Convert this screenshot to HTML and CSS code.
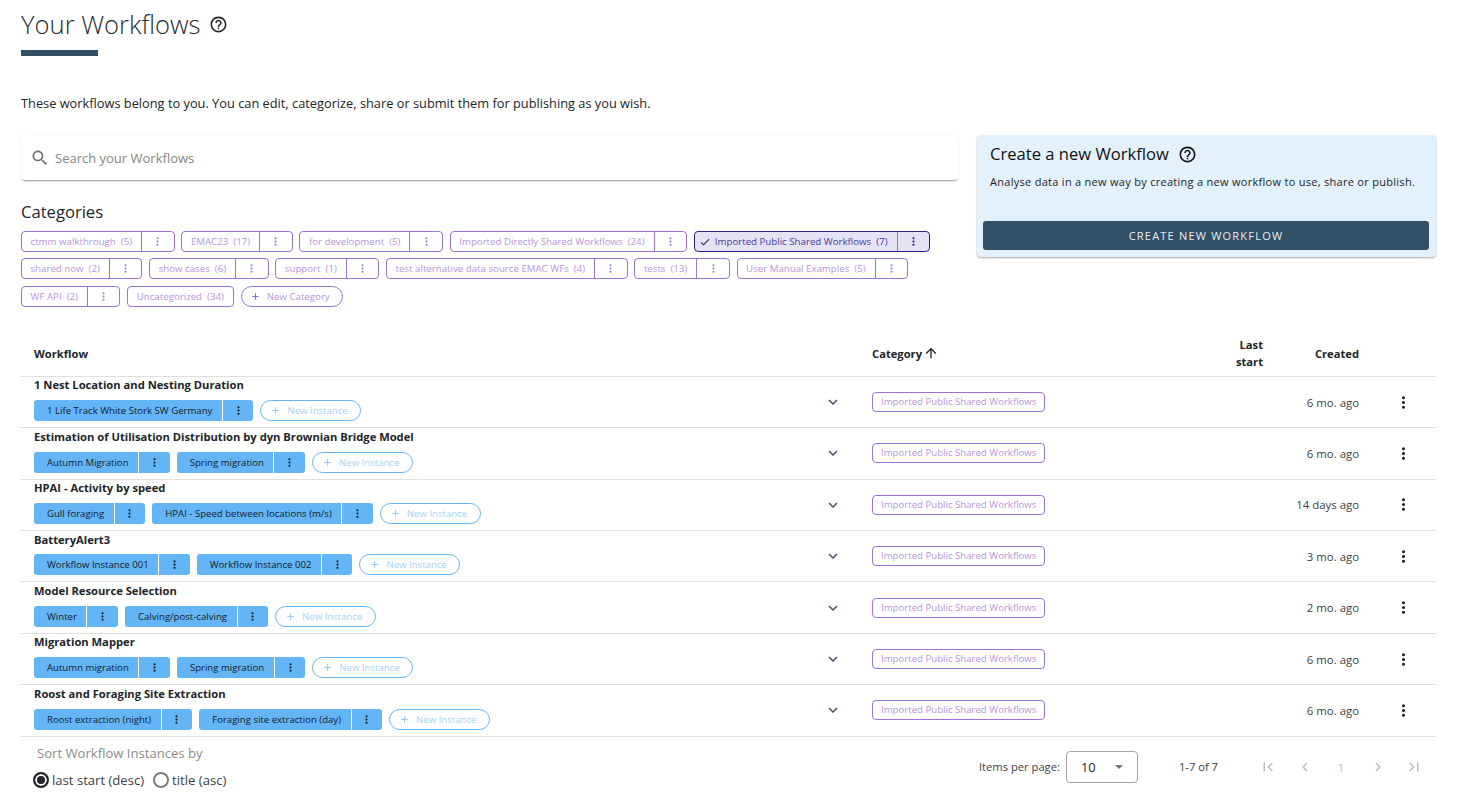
FILE: index.html
```html
<!DOCTYPE html>
<html lang="en">
<head>
<meta charset="utf-8">
<title>Your Workflows</title>
<link rel="stylesheet" href="styles.css">
</head>
<body>
<svg class="defs" aria-hidden="true">
<symbol id="help" viewBox="0 0 24 24"><path d="M11 18h2v-2h-2v2zm1-16C6.48 2 2 6.48 2 12s4.48 10 10 10 10-4.48 10-10S17.52 2 12 2zm0 18c-4.41 0-8-3.59-8-8s3.59-8 8-8 8 3.59 8 8-3.59 8-8 8zm0-14c-2.21 0-4 1.79-4 4h2c0-1.1.9-2 2-2s2 .9 2 2c0 2-3 1.75-3 5h2c0-2.25 3-2.5 3-5 0-2.21-1.79-4-4-4z"/></symbol>
<symbol id="search" viewBox="0 0 24 24"><path d="M15.5 14h-.79l-.28-.27C15.41 12.59 16 11.11 16 9.5 16 5.91 13.09 3 9.5 3S3 5.91 3 9.5 5.91 16 9.5 16c1.61 0 3.09-.59 4.23-1.57l.27.28v.79l5 4.99L20.49 19l-4.99-5zm-6 0C7.01 14 5 11.99 5 9.5S7.01 5 9.5 5 14 7.01 14 9.5 11.99 14 9.5 14z"/></symbol>
<symbol id="more" viewBox="0 0 24 24"><path d="M12 8c1.1 0 2-.9 2-2s-.9-2-2-2-2 .9-2 2 .9 2 2 2zm0 2c-1.1 0-2 .9-2 2s.9 2 2 2 2-.9 2-2-.9-2-2-2zm0 6c-1.1 0-2 .9-2 2s.9 2 2 2 2-.9 2-2-.9-2-2-2z"/></symbol>
<symbol id="expand" viewBox="0 0 24 24"><path d="M16.59 8.59L12 13.17 7.41 8.59 6 10l6 6 6-6z"/></symbol>
<symbol id="add" viewBox="0 0 24 24"><path d="M19 13h-6v6h-2v-6H5v-2h6V5h2v6h6v2z"/></symbol>
<symbol id="check" viewBox="0 0 24 24"><path d="M9 16.17L4.83 12l-1.42 1.41L9 19 21 7l-1.41-1.41z"/></symbol>
<symbol id="up" viewBox="0 0 24 24"><path d="M4 12l1.41 1.41L11 7.83V20h2V7.83l5.58 5.59L20 12l-8-8-8 8z"/></symbol>
<symbol id="first" viewBox="0 0 24 24"><path d="M18.41 16.59L13.82 12l4.59-4.59L17 6l-6 6 6 6zM6 6h2v12H6z"/></symbol>
<symbol id="last" viewBox="0 0 24 24"><path d="M5.59 7.41L10.18 12l-4.59 4.59L7 18l6-6-6-6zM16 6h2v12h-2z"/></symbol>
<symbol id="prev" viewBox="0 0 24 24"><path d="M15.41 7.41L14 6l-6 6 6 6 1.41-1.41L10.83 12z"/></symbol>
<symbol id="next" viewBox="0 0 24 24"><path d="M10 6L8.59 7.41 13.17 12l-4.58 4.59L10 18l6-6z"/></symbol>
</svg>
<main class="page">
  <header class="head">
    <h1 class="title">Your Workflows <svg class="title-help"><use href="#help"/></svg></h1>
    <div class="rule"></div>
  </header>
  <p class="intro">These workflows belong to you. You can edit, categorize, share or submit them for publishing as you wish.</p>

  <section class="top">
    <div class="top-left">
      <div class="search">
        <svg class="search-icon"><use href="#search"/></svg>
        <span class="search-ph">Search your Workflows</span>
      </div>
      <h2 class="cat-title">Categories</h2>
      <div class="chips">
        <div class="cat"><span class="cat-label">ctmm walkthrough&nbsp; (5)</span><span class="cat-menu"><svg class="dots"><use href="#more"/></svg></span></div>
        <div class="cat"><span class="cat-label">EMAC23&nbsp; (17)</span><span class="cat-menu"><svg class="dots"><use href="#more"/></svg></span></div>
        <div class="cat"><span class="cat-label">for development&nbsp; (5)</span><span class="cat-menu"><svg class="dots"><use href="#more"/></svg></span></div>
        <div class="cat"><span class="cat-label">Imported Directly Shared Workflows&nbsp; (24)</span><span class="cat-menu"><svg class="dots"><use href="#more"/></svg></span></div>
        <div class="cat cat-on"><span class="cat-label"><svg class="cat-check"><use href="#check"/></svg>Imported Public Shared Workflows&nbsp; (7)</span><span class="cat-menu"><svg class="dots"><use href="#more"/></svg></span></div>
        <div class="cat"><span class="cat-label">shared now&nbsp; (2)</span><span class="cat-menu"><svg class="dots"><use href="#more"/></svg></span></div>
        <div class="cat"><span class="cat-label">show cases&nbsp; (6)</span><span class="cat-menu"><svg class="dots"><use href="#more"/></svg></span></div>
        <div class="cat"><span class="cat-label">support&nbsp; (1)</span><span class="cat-menu"><svg class="dots"><use href="#more"/></svg></span></div>
        <div class="cat"><span class="cat-label">test alternative data source EMAC WFs&nbsp; (4)</span><span class="cat-menu"><svg class="dots"><use href="#more"/></svg></span></div>
        <div class="cat"><span class="cat-label">tests&nbsp; (13)</span><span class="cat-menu"><svg class="dots"><use href="#more"/></svg></span></div>
        <div class="cat"><span class="cat-label">User Manual Examples&nbsp; (5)</span><span class="cat-menu"><svg class="dots"><use href="#more"/></svg></span></div>
        <div class="cat"><span class="cat-label">WF API&nbsp; (2)</span><span class="cat-menu"><svg class="dots"><use href="#more"/></svg></span></div>
        <div class="cat"><span class="cat-label">Uncategorized&nbsp; (34)</span></div>
        <div class="cat cat-new"><svg class="cat-add"><use href="#add"/></svg>New Category</div>
      </div>
    </div>
    <aside class="create">
      <h2 class="create-title">Create a new Workflow <svg class="create-help"><use href="#help"/></svg></h2>
      <p class="create-text">Analyse data in a new way by creating a new workflow to use, share or publish.</p>
      <div class="create-btn">CREATE NEW WORKFLOW</div>
    </aside>
  </section>

  <section class="table">
    <div class="row row-head">
      <div>Workflow</div>
      <div></div>
      <div class="th-cat">Category <svg class="sort"><use href="#up"/></svg></div>
      <div class="num">Last<br>start</div>
      <div class="num">Created</div>
      <div></div>
    </div>

    <div class="row">
      <div class="wf">
        <div class="wf-name">1 Nest Location and Nesting Duration</div>
        <div class="insts">
          <div class="inst"><span class="inst-label">1 Life Track White Stork SW Germany</span><span class="inst-menu"><svg class="dots"><use href="#more"/></svg></span></div>
          <div class="new-inst"><svg class="new-add"><use href="#add"/></svg>New Instance</div>
        </div>
      </div>
      <div class="exp"><svg class="chev"><use href="#expand"/></svg></div>
      <div class="cell-cat"><span class="tag">Imported Public Shared Workflows</span></div>
      <div></div>
      <div class="num date">6 mo. ago</div>
      <div class="act"><svg class="act-dots"><use href="#more"/></svg></div>
    </div>

    <div class="row">
      <div class="wf">
        <div class="wf-name">Estimation of Utilisation Distribution by dyn Brownian Bridge Model</div>
        <div class="insts">
          <div class="inst"><span class="inst-label">Autumn Migration</span><span class="inst-menu"><svg class="dots"><use href="#more"/></svg></span></div>
          <div class="inst"><span class="inst-label">Spring migration</span><span class="inst-menu"><svg class="dots"><use href="#more"/></svg></span></div>
          <div class="new-inst"><svg class="new-add"><use href="#add"/></svg>New Instance</div>
        </div>
      </div>
      <div class="exp"><svg class="chev"><use href="#expand"/></svg></div>
      <div class="cell-cat"><span class="tag">Imported Public Shared Workflows</span></div>
      <div></div>
      <div class="num date">6 mo. ago</div>
      <div class="act"><svg class="act-dots"><use href="#more"/></svg></div>
    </div>

    <div class="row">
      <div class="wf">
        <div class="wf-name">HPAI - Activity by speed</div>
        <div class="insts">
          <div class="inst"><span class="inst-label">Gull foraging</span><span class="inst-menu"><svg class="dots"><use href="#more"/></svg></span></div>
          <div class="inst"><span class="inst-label">HPAI - Speed between locations (m/s)</span><span class="inst-menu"><svg class="dots"><use href="#more"/></svg></span></div>
          <div class="new-inst"><svg class="new-add"><use href="#add"/></svg>New Instance</div>
        </div>
      </div>
      <div class="exp"><svg class="chev"><use href="#expand"/></svg></div>
      <div class="cell-cat"><span class="tag">Imported Public Shared Workflows</span></div>
      <div></div>
      <div class="num date">14 days ago</div>
      <div class="act"><svg class="act-dots"><use href="#more"/></svg></div>
    </div>

    <div class="row">
      <div class="wf">
        <div class="wf-name">BatteryAlert3</div>
        <div class="insts">
          <div class="inst"><span class="inst-label">Workflow Instance 001</span><span class="inst-menu"><svg class="dots"><use href="#more"/></svg></span></div>
          <div class="inst"><span class="inst-label">Workflow Instance 002</span><span class="inst-menu"><svg class="dots"><use href="#more"/></svg></span></div>
          <div class="new-inst"><svg class="new-add"><use href="#add"/></svg>New Instance</div>
        </div>
      </div>
      <div class="exp"><svg class="chev"><use href="#expand"/></svg></div>
      <div class="cell-cat"><span class="tag">Imported Public Shared Workflows</span></div>
      <div></div>
      <div class="num date">3 mo. ago</div>
      <div class="act"><svg class="act-dots"><use href="#more"/></svg></div>
    </div>

    <div class="row">
      <div class="wf">
        <div class="wf-name">Model Resource Selection</div>
        <div class="insts">
          <div class="inst"><span class="inst-label">Winter</span><span class="inst-menu"><svg class="dots"><use href="#more"/></svg></span></div>
          <div class="inst"><span class="inst-label">Calving/post-calving</span><span class="inst-menu"><svg class="dots"><use href="#more"/></svg></span></div>
          <div class="new-inst"><svg class="new-add"><use href="#add"/></svg>New Instance</div>
        </div>
      </div>
      <div class="exp"><svg class="chev"><use href="#expand"/></svg></div>
      <div class="cell-cat"><span class="tag">Imported Public Shared Workflows</span></div>
      <div></div>
      <div class="num date">2 mo. ago</div>
      <div class="act"><svg class="act-dots"><use href="#more"/></svg></div>
    </div>

    <div class="row">
      <div class="wf">
        <div class="wf-name">Migration Mapper</div>
        <div class="insts">
          <div class="inst"><span class="inst-label">Autumn migration</span><span class="inst-menu"><svg class="dots"><use href="#more"/></svg></span></div>
          <div class="inst"><span class="inst-label">Spring migration</span><span class="inst-menu"><svg class="dots"><use href="#more"/></svg></span></div>
          <div class="new-inst"><svg class="new-add"><use href="#add"/></svg>New Instance</div>
        </div>
      </div>
      <div class="exp"><svg class="chev"><use href="#expand"/></svg></div>
      <div class="cell-cat"><span class="tag">Imported Public Shared Workflows</span></div>
      <div></div>
      <div class="num date">6 mo. ago</div>
      <div class="act"><svg class="act-dots"><use href="#more"/></svg></div>
    </div>

    <div class="row">
      <div class="wf">
        <div class="wf-name">Roost and Foraging Site Extraction</div>
        <div class="insts">
          <div class="inst"><span class="inst-label">Roost extraction (night)</span><span class="inst-menu"><svg class="dots"><use href="#more"/></svg></span></div>
          <div class="inst"><span class="inst-label">Foraging site extraction (day)</span><span class="inst-menu"><svg class="dots"><use href="#more"/></svg></span></div>
          <div class="new-inst"><svg class="new-add"><use href="#add"/></svg>New Instance</div>
        </div>
      </div>
      <div class="exp"><svg class="chev"><use href="#expand"/></svg></div>
      <div class="cell-cat"><span class="tag">Imported Public Shared Workflows</span></div>
      <div></div>
      <div class="num date">6 mo. ago</div>
      <div class="act"><svg class="act-dots"><use href="#more"/></svg></div>
    </div>
  </section>

  <footer class="foot">
    <div class="sort-box">
      <div class="sort-label">Sort Workflow Instances by</div>
      <div class="radios">
        <span class="radio radio-on"></span><span class="radio-text">last start (desc)</span>
        <span class="radio"></span><span class="radio-text">title (asc)</span>
      </div>
    </div>
    <div class="pager">
      <span class="per">Items per page:</span>
      <div class="select"><span>10</span><span class="caret"></span></div>
      <span class="range">1-7 of 7</span>
      <div class="pages">
        <svg class="pg"><use href="#first"/></svg>
        <svg class="pg"><use href="#prev"/></svg>
        <span class="pg-num">1</span>
        <svg class="pg"><use href="#next"/></svg>
        <svg class="pg"><use href="#last"/></svg>
      </div>
    </div>
  </footer>
</main>
</body>
</html>
```

FILE: styles.css
```css
* { box-sizing: border-box; }
html, body { margin: 0; padding: 0; background: #fff; }
body { font-family: "Open Sans", sans-serif; color: #212529; overflow: hidden; }
.defs { display: none; }
svg { fill: currentColor; display: block; flex: none; }
.page { padding: 0 21px; width: 1457px; }

.head { height: 56px; }
.title { margin: 0; height: 50px; padding-top: 7px; display: flex; align-items: flex-start; font-size: 25.6px; font-weight: 300; line-height: 35px; color: #1f2a33; letter-spacing: 0; }
.title-help { width: 19px; height: 19px; margin: 8px 0 0 9px; color: #212529; }
.rule { width: 77px; height: 6px; background: #314f65; }

.intro { margin: 37px 0 0; font-size: 12.8px; line-height: 20px; height: 21px; color: #212529; }

.top { display: flex; justify-content: space-between; margin-top: 21px; height: 196px; }
.top-left { width: 937px; }
.search { height: 45px; display: flex; align-items: center; padding-left: 9px; background: #fff; border-radius: 4px; box-shadow: 0 2px 2px -1px rgba(0,0,0,.42), 0 0 3px rgba(0,0,0,.06); }
.search-icon { width: 20px; height: 20px; color: #757575; }
.search-ph { margin-left: 5px; font-size: 13px; color: #868686; }
.cat-title { margin: 21px 0 0; font-size: 16.6px; font-weight: 500; line-height: 22px; height: 30px; color: #212529; }

.chips { display: flex; flex-wrap: wrap; gap: 6.4px 6.8px; }
.cat { display: inline-flex; align-items: stretch; height: 21px; border: 1px solid #9c72d6; border-radius: 4px; font-size: 9.7px; line-height: 19px; color: #b795e3; background: #fff; white-space: nowrap; }
.cat-label { padding: 0 9px 0 8.5px; display: flex; align-items: center; }
.cat-menu { width: 32.5px; border-left: 1px solid #9c72d6; display: flex; align-items: center; justify-content: center; color: #a57dde; }
.dots { width: 13px; height: 13px; }
.cat-on { background: #e5e2f3; border-color: #2d1e8c; color: #4a3aa6; }
.cat-on .cat-menu { border-left-color: #9c72d6; color: #2d1e8c; }
.cat-check { width: 12px; height: 12px; margin-right: 4px; margin-left: -4.5px; color: #2b2a55; }
.cat-new { border-radius: 11px; align-items: center; padding: 0 12px 0 8px; }
.cat-add { width: 11px; height: 11px; margin-right: 6px; color: #8a63cc; }

.create { width: 459px; height: 122px; padding: 8px 7px 0 6px; background: #e3f1fc; border-radius: 4px; box-shadow: 0 1px 2px rgba(0,0,0,.35); }
.create-title { margin: 0 0 0 7px; display: flex; align-items: center; font-size: 16.6px; font-weight: 500; line-height: 22px; color: #111; }
.create-help { width: 19px; height: 19px; margin-left: 9px; color: #111; }
.create-text { margin: 7px 0 0 7px; font-size: 11px; line-height: 20px; height: 49px; color: #212529; letter-spacing: .285px; white-space: nowrap; }
.create-btn { height: 29px; line-height: 29px; text-align: center; background: #314f65; color: #e8eef2; border-radius: 3px; font-size: 11px; letter-spacing: .11em; font-weight: 400; }

.row { display: grid; grid-template-columns: 775px 48px 351px 55px 96px 77px; height: 51.4px; padding-left: 13px; border-bottom: 1px solid #e0e0e0; align-items: center; }
.row-head { height: 45.9px; font-size: 11.2px; font-weight: 700; line-height: 17px; color: #212529; }
.th-cat { display: flex; align-items: center; padding-left: 15px; gap: 1px; }
.sort { width: 16px; height: 16px; color: #212529; }
.num { text-align: right; }
.date { font-size: 11.4px; color: #3a3f44; }

.wf { align-self: start; }
.wf-name { font-size: 11.2px; font-weight: 700; line-height: 16px; padding-top: .6px; color: #212529; white-space: nowrap; }
.insts { display: flex; gap: 7px; margin-top: 6.7px; align-items: center; }
.inst { display: inline-flex; height: 21px; background: #64b5f6; border-radius: 3px; font-size: 9.6px; line-height: 21px; color: #13202c; white-space: nowrap; }
.inst-label { padding: 0 9.5px 0 13px; }
.inst-menu { width: 31.6px; border-left: 1px solid #fff; display: flex; align-items: center; justify-content: center; color: #13202c; }
.new-inst { display: inline-flex; align-items: center; height: 21px; padding: 0 12.5px 0 9px; border: 1px solid #64b5f6; border-radius: 11px; font-size: 9.6px; color: #a5d3f8; white-space: nowrap; }
.new-add { width: 11px; height: 11px; margin-right: 6px; color: #8dc8f8; }

.exp { display: flex; justify-content: center; }
.chev { width: 18px; height: 18px; color: #3d5266; }
.cell-cat { padding-left: 15px; display: flex; align-items: center; }
.tag { display: block; height: 20px; padding: 0 8px; border: 1px solid #9c72d6; border-radius: 4px; font-size: 9.65px; line-height: 18px; color: #b795e3; white-space: nowrap; }
.act { padding-left: 12px; display: flex; justify-content: center; }
.act-dots { width: 19px; height: 19px; color: #212529; }

.foot { display: flex; justify-content: space-between; }
.sort-box { padding-top: 6.6px; }
.sort-label { margin-left: 16px; font-size: 13.1px; line-height: 20px; color: #8c8c8c; }
.radios { display: flex; align-items: center; margin-top: 7px; margin-left: 12px; font-size: 13.1px; color: #3a3f44; height: 20px; }
.radio { width: 16px; height: 16px; border: 2px solid #7d7d7d; border-radius: 50%; background: #fff; margin-right: 3px; }
.radio-on { border-color: #212529; background: #212529; box-shadow: inset 0 0 0 2px #fff; }
.radio-text { margin-right: 9px; }

.pager { display: flex; align-items: center; height: 60px; font-size: 11.2px; color: #3a3f44; }
.per { margin-right: 6px; }
.select { width: 72px; height: 32px; border: 1px solid #a5a5a5; border-radius: 4px; display: flex; align-items: center; justify-content: space-between; padding: 0 14px; font-size: 12.8px; color: #212529; }
.caret { width: 0; height: 0; border-left: 4px solid transparent; border-right: 4px solid transparent; border-top: 4px solid #757575; }
.range { margin-left: 41px; margin-right: 41px; }
.pages { display: flex; align-items: center; gap: 18.5px; padding-right: 13px; }
.pg { width: 18px; height: 18px; color: #bdbdbd; }
.pg-num { width: 18px; padding-top: 2px; text-align: center; color: #bdbdbd; font-size: 11.2px; }
```
